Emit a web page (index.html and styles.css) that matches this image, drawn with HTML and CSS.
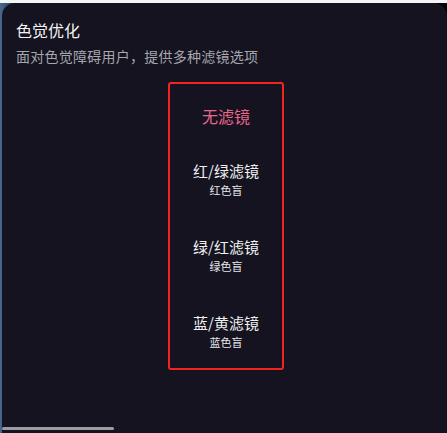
FILE: index.html
```html
<!DOCTYPE html>
<html lang="zh-CN">
<head>
<meta charset="utf-8">
<title>色觉优化</title>
<link rel="stylesheet" href="styles.css">
</head>
<body>
<div class="topstrip"></div>
<div class="stage">
  <section class="panel">
    <h1 class="title">色觉优化</h1>
    <p class="desc">面对色觉障碍用户，提供多种滤镜选项</p>
    <div class="options">
      <div class="opt opt-none">无滤镜</div>
      <div class="opt">
        <div class="opt-label">红/绿滤镜</div>
        <div class="opt-sub">红色盲</div>
      </div>
      <div class="opt">
        <div class="opt-label">绿/红滤镜</div>
        <div class="opt-sub">绿色盲</div>
      </div>
      <div class="opt">
        <div class="opt-label">蓝/黄滤镜</div>
        <div class="opt-sub">蓝色盲</div>
      </div>
    </div>
    <div class="scrollbar"></div>
  </section>
</div>
</body>
</html>
```

FILE: styles.css
```css
html, body {
  margin: 0;
  padding: 0;
}
body {
  width: 447px;
  height: 433px;
  overflow: hidden;
  background: #000;
  font-family: "Noto Sans CJK SC", "Noto Sans", sans-serif;
}
.topstrip {
  height: 3px;
  background: #f4f4f6;
}
.stage {
  height: 430px;
  background: linear-gradient(90deg, #4a6690 0, #2a3a58 14px, #000 40px);
  padding-left: 2px;
}
.panel {
  position: relative;
  height: 430px;
  box-sizing: border-box;
  padding: 16px 14px 0;
  background: #14131f;
  border-radius: 13px 13px 0 0;
}
.title {
  margin: 0;
  font-size: 16px;
  line-height: 22px;
  font-weight: 400;
  color: #f2f2f4;
}
.desc {
  margin: 5px 0 0;
  font-size: 14px;
  line-height: 20px;
  letter-spacing: 0.25px;
  color: #a6a6ae;
}
.options {
  margin: 16px 0 0 152px;
  width: 116px;
  height: 288px;
  box-sizing: border-box;
  border: 2px solid #f5231f;
  border-radius: 3px;
  padding-top: 21px;
  display: flex;
  flex-direction: column;
  align-items: center;
  text-align: center;
}
.opt {
  margin-top: 40px;
  color: #f0f0f2;
}
.opt-none {
  margin-top: 0;
  font-size: 16px;
  line-height: 22px;
  color: #e8668c;
  margin-bottom: -6px;
}
.opt-label {
  font-size: 15px;
  line-height: 20px;
}
.opt-sub {
  margin-top: 2px;
  font-size: 11px;
  line-height: 14px;
  color: #e6e6ea;
}
.scrollbar {
  position: absolute;
  left: 0;
  bottom: 3px;
  width: 112px;
  height: 3px;
  border-radius: 2px;
  background: #9c9ca2;
}
```
